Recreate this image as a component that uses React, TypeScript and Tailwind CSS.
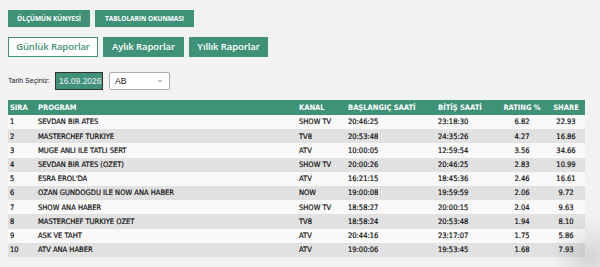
import React from "react"
import { ChevronDown } from "lucide-react"

const rows = [
  ["1", "SEVDAN BIR ATES", "SHOW TV", "20:46:25", "23:18:30", "6.82", "22.93"],
  ["2", "MASTERCHEF TURKIYE", "TV8", "20:53:48", "24:35:26", "4.27", "16.86"],
  ["3", "MUGE ANLI ILE TATLI SERT", "ATV", "10:00:05", "12:59:54", "3.56", "34.66"],
  ["4", "SEVDAN BIR ATES (OZET)", "SHOW TV", "20:00:26", "20:46:25", "2.83", "10.99"],
  ["5", "ESRA EROL'DA", "ATV", "16:21:15", "18:45:36", "2.46", "16.61"],
  ["6", "OZAN GUNDOGDU ILE NOW ANA HABER", "NOW", "19:00:08", "19:59:59", "2.06", "9.72"],
  ["7", "SHOW ANA HABER", "SHOW TV", "18:58:27", "20:00:15", "2.04", "9.63"],
  ["8", "MASTERCHEF TURKIYE OZET", "TV8", "18:58:24", "20:53:48", "1.94", "8.10"],
  ["9", "ASK VE TAHT", "ATV", "20:44:16", "23:17:07", "1.75", "5.86"],
  ["10", "ATV ANA HABER", "ATV", "19:00:06", "19:53:45", "1.68", "7.93"],
]

const cond = "[font-family:'DejaVu_Sans_Condensed','Roboto',sans-serif] [font-stretch:condensed]"

function Row({ r, i }: { r: string[]; i: number }) {
  return (
    <div className={`flex h-[14.2px] items-center text-[7.5px] text-[#111] [-webkit-text-stroke:0.2px_#111] ${i % 2 ? "bg-[#e1e1e1]" : "bg-[#f9f9f9]"}`}>
      <div className="w-[28px] pl-[2px]">{r[0]}</div>
      <div className="w-[263px] pl-[2px]">{r[1]}</div>
      <div className="w-[49px]">{r[2]}</div>
      <div className="w-[90px]">{r[3]}</div>
      <div className="w-[58px]">{r[4]}</div>
      <div className="w-[52px] text-center">{r[5]}</div>
      <div className="w-[36px] text-center">{r[6]}</div>
    </div>
  )
}

export default function App() {
  return (
    <div className="relative h-[267px] w-[600px] overflow-hidden bg-[#f2f2f2] pl-[8px] pt-[10px]">
      <div className="flex gap-[5px] [font-family:'Open_Sans',sans-serif]">
        <div className="flex h-[17px] w-[82px] items-center justify-center bg-[#3f9278] text-[6.5px] font-bold text-white">
          ÖLÇÜMÜN KÜNYESİ
        </div>
        <div className="flex h-[17px] w-[99px] items-center justify-center bg-[#3f9278] text-[6.5px] font-bold text-white">
          TABLOLARIN OKUNMASI
        </div>
      </div>

      <div className="mt-[10px] flex gap-[5px] [font-family:'Open_Sans',sans-serif]">
        <div className="flex h-[20px] w-[90px] items-center justify-center border border-[#3f9278] bg-white text-[9.5px] font-semibold tracking-[-0.1px] text-[#3f9278]">
          Günlük Raporlar
        </div>
        <div className="flex h-[20px] w-[81px] items-center justify-center bg-[#3f9278] text-[9.5px] font-semibold tracking-[-0.1px] text-white">
          Aylık Raporlar
        </div>
        <div className="flex h-[20px] w-[79px] items-center justify-center bg-[#3f9278] text-[9.5px] font-semibold tracking-[-0.1px] text-white">
          Yıllık Raporlar
        </div>
      </div>

      <div className="mt-[15px] flex items-center [font-family:'Liberation_Sans',sans-serif]">
        <span className="w-[47px] text-[7px] text-[#222]">Tarih Seçiniz:</span>
        <div className="flex h-[18px] w-[48px] items-center border border-[#333] bg-[#3f9278] pl-[3px] text-[8.5px] text-[#eef]">
          16.09.2026
        </div>
        <div className="ml-[6px] flex h-[18px] w-[61px] items-center justify-between rounded-[2px] border border-[#aaa] bg-white px-[5px] text-[8.5px] font-medium text-[#111]">
          <span>AB</span>
          <ChevronDown className="h-[8px] w-[8px] text-[#555]" strokeWidth={2} />
        </div>
      </div>

      <div className={`mt-[10px] w-[577px] ${cond}`}>
        <div className="flex h-[15px] items-center bg-[#3f9278] text-[7.5px] font-bold text-white">
          <div className="w-[28px] pl-[2px]">SIRA</div>
          <div className="w-[263px] pl-[2px]">PROGRAM</div>
          <div className="w-[49px]">KANAL</div>
          <div className="w-[90px]">BAŞLANGIÇ SAATİ</div>
          <div className="w-[58px]">BİTİŞ SAATİ</div>
          <div className="w-[52px] text-center">RATING %</div>
          <div className="w-[36px] text-center">SHARE</div>
        </div>
        {rows.map((r, i) => (
          <Row key={i} r={r} i={i} />
        ))}
      </div>

      <div className="pointer-events-none absolute bottom-[-30px] right-[-30px] h-[80px] w-[80px] rounded-full bg-[radial-gradient(circle,rgba(0,0,0,0.12),transparent_70%)]" />
    </div>
  )
}
